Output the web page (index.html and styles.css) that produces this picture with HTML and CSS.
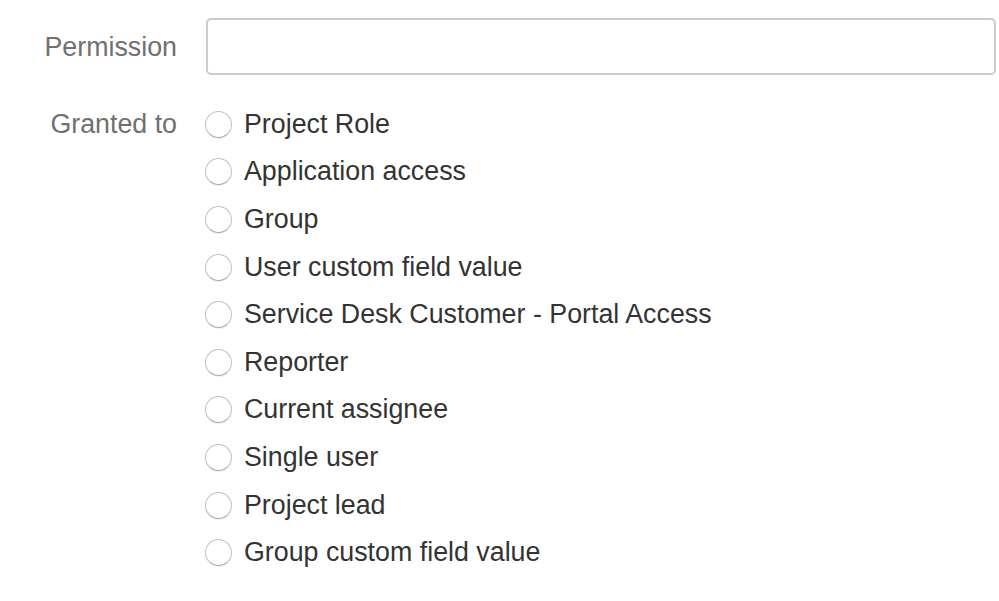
FILE: index.html
```html
<!DOCTYPE html>
<html>
<head>
<meta charset="utf-8">
<link rel="stylesheet" href="styles.css">
</head>
<body>
<form class="form">
  <div class="field">
    <label class="label label-input" for="perm">Permission</label>
    <input id="perm" class="text" type="text">
  </div>
  <div class="field field-radios">
    <div class="label label-radios">Granted to</div>
    <div class="options">
      <label class="option"><span class="radio"></span><span>Project Role</span></label>
      <label class="option"><span class="radio"></span><span>Application access</span></label>
      <label class="option"><span class="radio"></span><span>Group</span></label>
      <label class="option"><span class="radio"></span><span>User custom field value</span></label>
      <label class="option"><span class="radio"></span><span>Service Desk Customer - Portal Access</span></label>
      <label class="option"><span class="radio"></span><span>Reporter</span></label>
      <label class="option"><span class="radio"></span><span>Current assignee</span></label>
      <label class="option"><span class="radio"></span><span>Single user</span></label>
      <label class="option"><span class="radio"></span><span>Project lead</span></label>
      <label class="option"><span class="radio"></span><span>Group custom field value</span></label>
    </div>
  </div>
</form>
</body>
</html>
```

FILE: styles.css
```css
html, body {
  margin: 0;
  padding: 0;
  background: #ffffff;
}
body {
  font-family: "Liberation Sans", Arial, sans-serif;
  font-size: 26.8px;
}
.form {
  padding: 18px 3px 0 0;
  display: flex;
  flex-direction: column;
  gap: 24.5px;
}
.field {
  display: flex;
  align-items: flex-start;
}
.label {
  width: 177px;
  flex: none;
  text-align: right;
  color: #707070;
  margin-right: 29px;
}
.label-input {
  line-height: 57px;
  height: 57px;
  margin-top: 1px;
}
.label-radios {
  line-height: 47.6px;
}
.text {
  flex: 1;
  height: 57px;
  box-sizing: border-box;
  border: 2px solid #cccccc;
  border-radius: 5px;
  margin: 0;
  padding: 0 10px;
  font: inherit;
  background: #fff;
  outline: none;
}
.options {
  display: flex;
  flex-direction: column;
  margin-left: -2px;
}
.option {
  display: flex;
  align-items: center;
  height: 47.6px;
  color: #333333;
}
.radio {
  width: 25px;
  height: 25px;
  flex: none;
  border-radius: 50%;
  border: 1px solid #c2c2c2;
  border-bottom-color: #aaaaaa;
  background: #ffffff;
  box-shadow: 0 1px 1px rgba(0,0,0,0.06);
  margin: 0 12px 0 1px;
}
```
